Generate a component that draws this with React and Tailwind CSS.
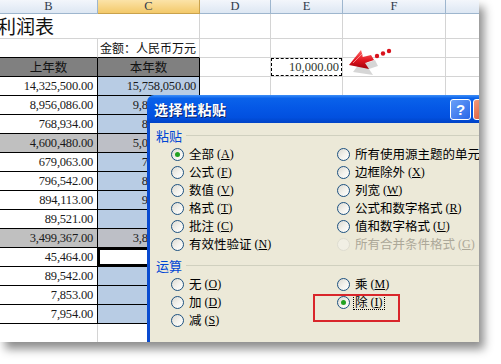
import React from "react";

const rows = [
  { b: "14,325,500.00", c: "15,758,050.00" },
  { b: "8,956,086.00", c: "9,851,694.60" },
  { b: "768,934.00", c: "845,827.40" },
  { b: "4,600,480.00", c: "5,060,528.00", gray: true },
  { b: "679,063.00", c: "746,969.30" },
  { b: "796,542.00", c: "876,196.20" },
  { b: "894,113.00", c: "983,524.30" },
  { b: "89,521.00", c: "98,473.10" },
  { b: "3,499,367.00", c: "3,849,303.70", gray: true },
  { b: "45,464.00", c: "", active: true },
  { b: "89,542.00", c: "98,496.20" },
  { b: "7,853.00", c: "8,638.30" },
  { b: "7,954.00", c: "8,749.40" },
];

const pasteLeft = [
  { label: "全部", key: "A", checked: true },
  { label: "公式", key: "F" },
  { label: "数值", key: "V" },
  { label: "格式", key: "T" },
  { label: "批注", key: "C" },
  { label: "有效性验证", key: "N" },
];

const pasteRight = [
  { label: "所有使用源主题的单元", key: "H" },
  { label: "边框除外", key: "X" },
  { label: "列宽", key: "W" },
  { label: "公式和数字格式", key: "R" },
  { label: "值和数字格式", key: "U" },
  { label: "所有合并条件格式", key: "G", disabled: true },
];

const opLeft = [
  { label: "无", key: "O" },
  { label: "加", key: "D" },
  { label: "减", key: "S" },
];

const opRight = [
  { label: "乘", key: "M" },
  { label: "除", key: "I", checked: true, focus: true },
];

const serif = "font-['Liberation_Serif','Times_New_Roman',serif]";
const cjk = "font-['Noto_Sans_CJK_SC',sans-serif]";

// blank cells D..G with light grid lines
const Blanks = () => (
  <>
    <div className="w-[71px] shrink-0 border-r border-b border-[#d4d4d4]" />
    <div className="w-[72px] shrink-0 border-r border-b border-[#d4d4d4]" />
    <div className="w-[103px] shrink-0 border-r border-b border-[#d4d4d4]" />
    <div className="w-[80px] shrink-0 border-r border-b border-[#d4d4d4]" />
  </>
);

const Radio = ({ checked, disabled }) => (
  <span
    className={`relative w-[13px] h-[13px] shrink-0 rounded-full border flex items-center justify-center ${
      disabled
        ? "border-[#dedcd0] bg-[#f1efe4]"
        : "border-[#1c5180] bg-[linear-gradient(135deg,#dcdad2_0%,#f4f3ee_55%,#ffffff_100%)]"
    }`}
  >
    {checked && <span className="w-[5px] h-[5px] rounded-full bg-[#21a121]" />}
  </span>
);

const Option = ({ item }) => (
  <div className="h-[18px] flex items-center gap-[3px] whitespace-nowrap">
    <Radio checked={item.checked} disabled={item.disabled} />
    <span
      className={`flex items-center px-[1px] ${
        item.focus ? "border border-dotted border-black" : "border border-transparent"
      } ${item.disabled ? "text-[#aca899]" : "text-black"}`}
    >
      <span className="text-[12.5px] leading-[14px]">{item.label}</span>
      <span className={`${serif} ml-[3px] text-[12px] leading-[14px]`}>
        (<span className="underline">{item.key}</span>)
      </span>
    </span>
  </div>
);

const Section = ({ title, left, right }) => (
  <div>
    <div className="h-[17px] flex items-center gap-[4px] pr-2">
      <span className="text-[13px] text-[#0046d5] leading-[16px]">{title}</span>
      <div className="flex-1 h-[2px] border-t border-[#d0d0bf] border-b-white" />
    </div>
    <div className="flex pl-[15px] pt-[1px]">
      <div className="w-[166px] shrink-0">
        {left.map((it) => (
          <Option key={it.key} item={it} />
        ))}
      </div>
      <div className="flex-1 overflow-hidden">
        {right.map((it) => (
          <Option key={it.key} item={it} />
        ))}
      </div>
    </div>
  </div>
);

export default function App() {
  return (
    <div className={`w-[501px] h-[364px] bg-white ${cjk}`}>
      <div className="relative w-[479px] h-[342px] overflow-hidden bg-white shadow-[5px_7px_9px_rgba(0,0,0,0.45)]">
        {/* column headers */}
        <div className={`flex h-[14px] ${serif} text-[12.5px] leading-[13px] text-[#2f3b4c]`}>
          <div className="w-[98px] shrink-0 text-center border-r border-b border-[#9eb6ce] bg-[linear-gradient(#f3f6fb,#dde7f3)]">B</div>
          <div className="w-[102px] shrink-0 text-center border-r border-b border-[#c9a24d] bg-[linear-gradient(#fbe3a8,#f3c96a)]">C</div>
          <div className="w-[71px] shrink-0 text-center border-r border-b border-[#9eb6ce] bg-[linear-gradient(#f3f6fb,#dde7f3)]">D</div>
          <div className="w-[72px] shrink-0 text-center border-r border-b border-[#9eb6ce] bg-[linear-gradient(#f3f6fb,#dde7f3)]">E</div>
          <div className="w-[103px] shrink-0 text-center border-r border-b border-[#9eb6ce] bg-[linear-gradient(#f3f6fb,#dde7f3)]">F</div>
          <div className="w-[80px] shrink-0 text-center border-r border-b border-[#9eb6ce] bg-[linear-gradient(#f3f6fb,#dde7f3)]">G</div>
        </div>

        {/* title row */}
        <div className="flex h-[25px]">
          <div className="w-[200px] shrink-0 border-r border-b border-[#d4d4d4] text-[19px] leading-[24px] text-[#111] -indent-[3px]">
            利润表
          </div>
          <Blanks />
        </div>

        {/* unit row */}
        <div className="flex h-[19px]">
          <div className="w-[98px] shrink-0 border-r border-b border-[#d4d4d4] border-b-black" />
          <div className="w-[102px] shrink-0 border-r border-b border-[#d4d4d4] border-b-black text-right pr-[3px] text-[12px] leading-[18px] text-[#111]">
            金额：人民币万元
          </div>
          <Blanks />
        </div>

        {/* table header row */}
        <div className="flex h-[19px]">
          <div className="w-[98px] shrink-0 border-r border-b border-black bg-[#808080] text-center text-[12.5px] leading-[18px] text-[#111]">
            上年数
          </div>
          <div className="w-[102px] shrink-0 border-r border-b border-black bg-[#808080] text-center text-[12.5px] leading-[18px] text-[#111]">
            本年数
          </div>
          <div className="w-[71px] shrink-0 border-r border-b border-[#d4d4d4]" />
          <div className="w-[72px] shrink-0 border-r border-b border-[#d4d4d4] p-0">
            <div className={`h-full border border-dashed border-black text-right pr-[2px] ${serif} text-[12.5px] leading-[16px] text-[#2e362e]`}>
              10,000.00
            </div>
          </div>
          <div className="w-[103px] shrink-0 border-r border-b border-[#d4d4d4]" />
          <div className="w-[80px] shrink-0 border-r border-b border-[#d4d4d4]" />
        </div>

        {/* data rows */}
        {rows.map((r, i) => (
          <div key={i} className={`flex h-[19px] ${serif} text-[12.5px] leading-[18px] text-[#1a1a1a]`}>
            <div
              className={`w-[98px] shrink-0 border-r border-b border-black text-right pr-[4px] tracking-[-0.2px] ${
                r.gray ? "bg-[#c0c0c0]" : "bg-white"
              }`}
            >
              {r.b}
            </div>
            {r.active ? (
              <div className="w-[102px] shrink-0 border-r border-b border-black bg-white p-0">
                <div className="h-full border-2 border-black" />
              </div>
            ) : (
              <div
                className={`w-[102px] shrink-0 border-r border-b border-black text-right pr-[3px] tracking-[-0.2px] ${
                  r.gray ? "bg-[#bdbfc6]" : "bg-[#b8cce4]"
                }`}
              >
                {r.c}
              </div>
            )}
            <Blanks />
          </div>
        ))}

        {/* empty last row */}
        <div className="flex h-[18px]">
          <div className="w-[98px] shrink-0 border-r border-[#d4d4d4]" />
          <div className="w-[102px] shrink-0 border-r border-[#d4d4d4]" />
          <Blanks />
        </div>

        {/* pointing arrow */}
        <svg className="absolute left-[344px] top-[44px]" width="50" height="34" viewBox="0 0 50 34">
          <defs>
            <linearGradient id="ar" x1="0" y1="0" x2="0" y2="1">
              <stop offset="0" stopColor="#ff6a6a" />
              <stop offset="0.55" stopColor="#e0141e" />
              <stop offset="1" stopColor="#a0000a" />
            </linearGradient>
          </defs>
          <path d="M7 25 L27 28 L23 22 L32 19 L29 13 L21 16 L19 9 Z" fill="#000" opacity="0.16" transform="translate(2,3)" />
          <path d="M5 21 L25 25 L21 19 L30 16 L27 11 L19 13 L17 6 Z" fill="url(#ar)" />
          <path d="M9 19 L18 10 L19 13" fill="none" stroke="#ffb0b0" strokeWidth="1" opacity="0.7" />
          <circle cx="33" cy="12" r="2.2" fill="#d8121c" />
          <circle cx="39" cy="9.5" r="2.2" fill="#d8121c" />
          <circle cx="45" cy="7" r="2.2" fill="#d8121c" />
        </svg>

        {/* paste special dialog */}
        <div className="absolute left-[147px] top-[95px] w-[350px] h-[300px] flex flex-col">
          <div className="h-[28px] shrink-0 rounded-tl-[7px] flex items-center pl-[7px] pr-[3px] bg-[linear-gradient(to_bottom,#3d8ef7_0%,#0a62ea_12%,#0558e6_45%,#0250df_80%,#0043c6_100%)]">
            <span className="text-white font-bold text-[14px] leading-[18px] tracking-[0.5px] [text-shadow:1px_1px_0_#0a246a]">
              选择性粘贴
            </span>
            <div className="flex-1" />
            <div className="w-[21px] h-[21px] rounded-[3px] border border-white bg-[linear-gradient(135deg,#6aa0f8,#2866e8)] flex items-center justify-center text-white font-bold text-[15px] leading-none font-['Liberation_Sans',sans-serif]">
              ?
            </div>
            <div className="w-[21px] h-[21px] ml-[2px] rounded-[3px] border border-white bg-[linear-gradient(135deg,#f09a7a,#d9482a)]" />
          </div>
          <div className="flex-1 border-l-[3px] border-[#0a4bd0] bg-[#ece9d8] pl-[6px] pt-[4px]">
            <Section title="粘贴" left={pasteLeft} right={pasteRight} />
            <div className="h-[4px]" />
            <Section title="运算" left={opLeft} right={opRight} />
          </div>
        </div>

        {/* highlight box */}
        <div className="absolute left-[313px] top-[294px] w-[87px] h-[28px] border-2 border-[#d9262b]" />
      </div>
    </div>
  );
}
